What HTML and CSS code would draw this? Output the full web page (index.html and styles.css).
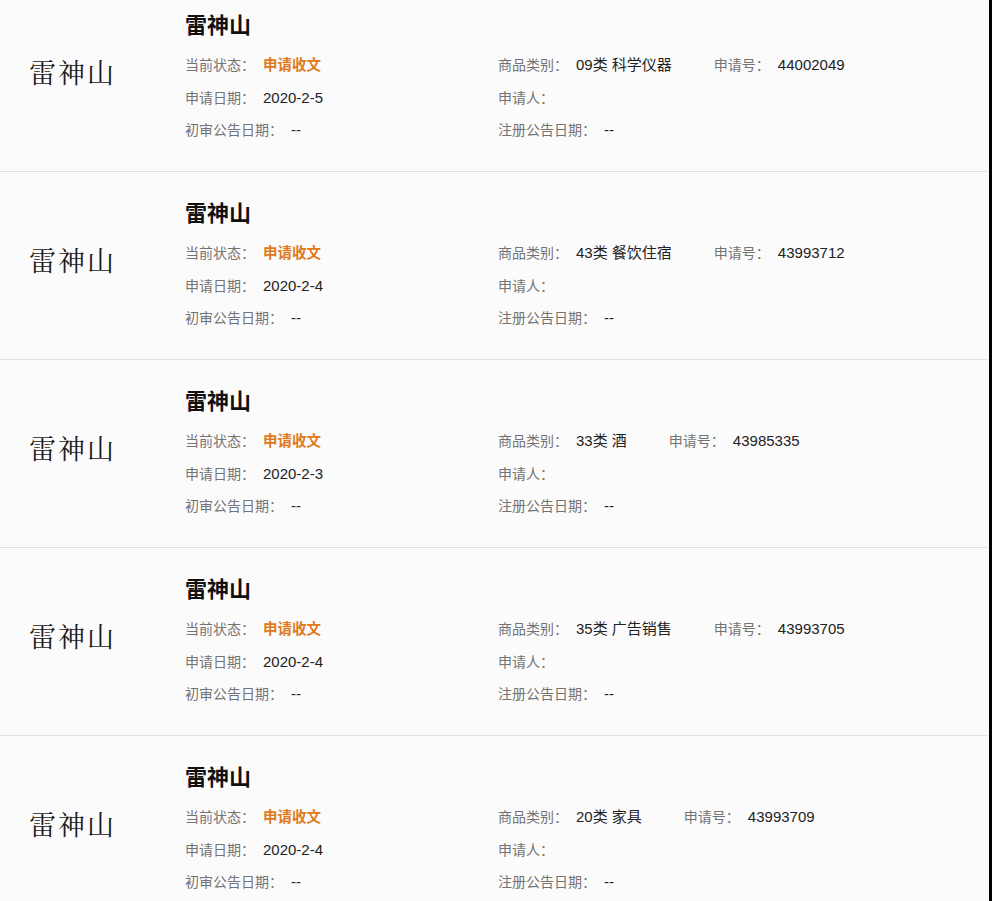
FILE: index.html
```html
<!DOCTYPE html>
<html lang="zh-CN">
<head>
<meta charset="utf-8">
<title>雷神山 商标</title>
<link rel="stylesheet" href="styles.css">
</head>
<body>
<div class="page">
  <div class="list">
    <div class="item">
      <div class="logo">雷神山</div>
      <div class="info">
        <div class="title">雷神山</div>
        <div class="grid">
          <div class="cell"><span class="label">当前状态：</span><span class="val status">申请收文</span></div>
          <div class="cell"><span class="label">商品类别：</span><span class="val cls">09类 科学仪器</span><span class="label">申请号：</span><span class="val">44002049</span></div>
          <div class="cell"><span class="label">申请日期：</span><span class="val">2020-2-5</span></div>
          <div class="cell"><span class="label">申请人：</span></div>
          <div class="cell"><span class="label">初审公告日期：</span><span class="val">--</span></div>
          <div class="cell"><span class="label">注册公告日期：</span><span class="val">--</span></div>
        </div>
      </div>
    </div>
    <div class="item">
      <div class="logo">雷神山</div>
      <div class="info">
        <div class="title">雷神山</div>
        <div class="grid">
          <div class="cell"><span class="label">当前状态：</span><span class="val status">申请收文</span></div>
          <div class="cell"><span class="label">商品类别：</span><span class="val cls">43类 餐饮住宿</span><span class="label">申请号：</span><span class="val">43993712</span></div>
          <div class="cell"><span class="label">申请日期：</span><span class="val">2020-2-4</span></div>
          <div class="cell"><span class="label">申请人：</span></div>
          <div class="cell"><span class="label">初审公告日期：</span><span class="val">--</span></div>
          <div class="cell"><span class="label">注册公告日期：</span><span class="val">--</span></div>
        </div>
      </div>
    </div>
    <div class="item">
      <div class="logo">雷神山</div>
      <div class="info">
        <div class="title">雷神山</div>
        <div class="grid">
          <div class="cell"><span class="label">当前状态：</span><span class="val status">申请收文</span></div>
          <div class="cell"><span class="label">商品类别：</span><span class="val cls">33类 酒</span><span class="label">申请号：</span><span class="val">43985335</span></div>
          <div class="cell"><span class="label">申请日期：</span><span class="val">2020-2-3</span></div>
          <div class="cell"><span class="label">申请人：</span></div>
          <div class="cell"><span class="label">初审公告日期：</span><span class="val">--</span></div>
          <div class="cell"><span class="label">注册公告日期：</span><span class="val">--</span></div>
        </div>
      </div>
    </div>
    <div class="item">
      <div class="logo">雷神山</div>
      <div class="info">
        <div class="title">雷神山</div>
        <div class="grid">
          <div class="cell"><span class="label">当前状态：</span><span class="val status">申请收文</span></div>
          <div class="cell"><span class="label">商品类别：</span><span class="val cls">35类 广告销售</span><span class="label">申请号：</span><span class="val">43993705</span></div>
          <div class="cell"><span class="label">申请日期：</span><span class="val">2020-2-4</span></div>
          <div class="cell"><span class="label">申请人：</span></div>
          <div class="cell"><span class="label">初审公告日期：</span><span class="val">--</span></div>
          <div class="cell"><span class="label">注册公告日期：</span><span class="val">--</span></div>
        </div>
      </div>
    </div>
    <div class="item">
      <div class="logo">雷神山</div>
      <div class="info">
        <div class="title">雷神山</div>
        <div class="grid">
          <div class="cell"><span class="label">当前状态：</span><span class="val status">申请收文</span></div>
          <div class="cell"><span class="label">商品类别：</span><span class="val cls">20类 家具</span><span class="label">申请号：</span><span class="val">43993709</span></div>
          <div class="cell"><span class="label">申请日期：</span><span class="val">2020-2-4</span></div>
          <div class="cell"><span class="label">申请人：</span></div>
          <div class="cell"><span class="label">初审公告日期：</span><span class="val">--</span></div>
          <div class="cell"><span class="label">注册公告日期：</span><span class="val">--</span></div>
        </div>
      </div>
    </div>
  </div>
</div>
</body>
</html>
```
FILE: styles.css
```css
html, body {
  margin: 0;
  padding: 0;
  height: 100%;
  overflow: hidden;
}
body {
  background: #fcfbfc;
  font-family: "Liberation Sans", "Noto Sans CJK SC", sans-serif;
  color: #222;
}
.page {
  height: 901px;
  border-right: 3px solid #000;
  box-sizing: border-box;
  overflow: hidden;
}
.list {
  margin-top: -16px;
  padding-right: 2px;
}
.item {
  display: flex;
  height: 188px;
  box-sizing: border-box;
  border-bottom: 1px solid #e0dfe0;
}
.logo {
  width: 185px;
  flex: none;
  box-sizing: border-box;
  padding-left: 29px;
  padding-top: 70px;
  font-family: "Noto Serif CJK SC", "Noto Serif CJK", "Noto Sans CJK SC", serif;
  font-size: 27px;
  line-height: 36px;
  letter-spacing: 2px;
  color: #1a1a1a;
}
.info {
  flex: 1;
  padding-top: 27px;
}
.title {
  font-size: 22px;
  font-weight: 700;
  line-height: 30px;
  color: #111;
  margin-bottom: 8px;
}
.grid {
  display: grid;
  grid-template-columns: 313px 1fr;
}
.cell {
  font-size: 14px;
  line-height: 32.5px;
  white-space: nowrap;
}
.label {
  color: #737373;
}
.val {
  color: #222;
  font-size: 15px;
  margin-left: 8px;
}
.cls {
  margin-right: 42px;
}
.status {
  color: #e07a1a;
  font-weight: 700;
  font-size: 14.5px;
}
```
